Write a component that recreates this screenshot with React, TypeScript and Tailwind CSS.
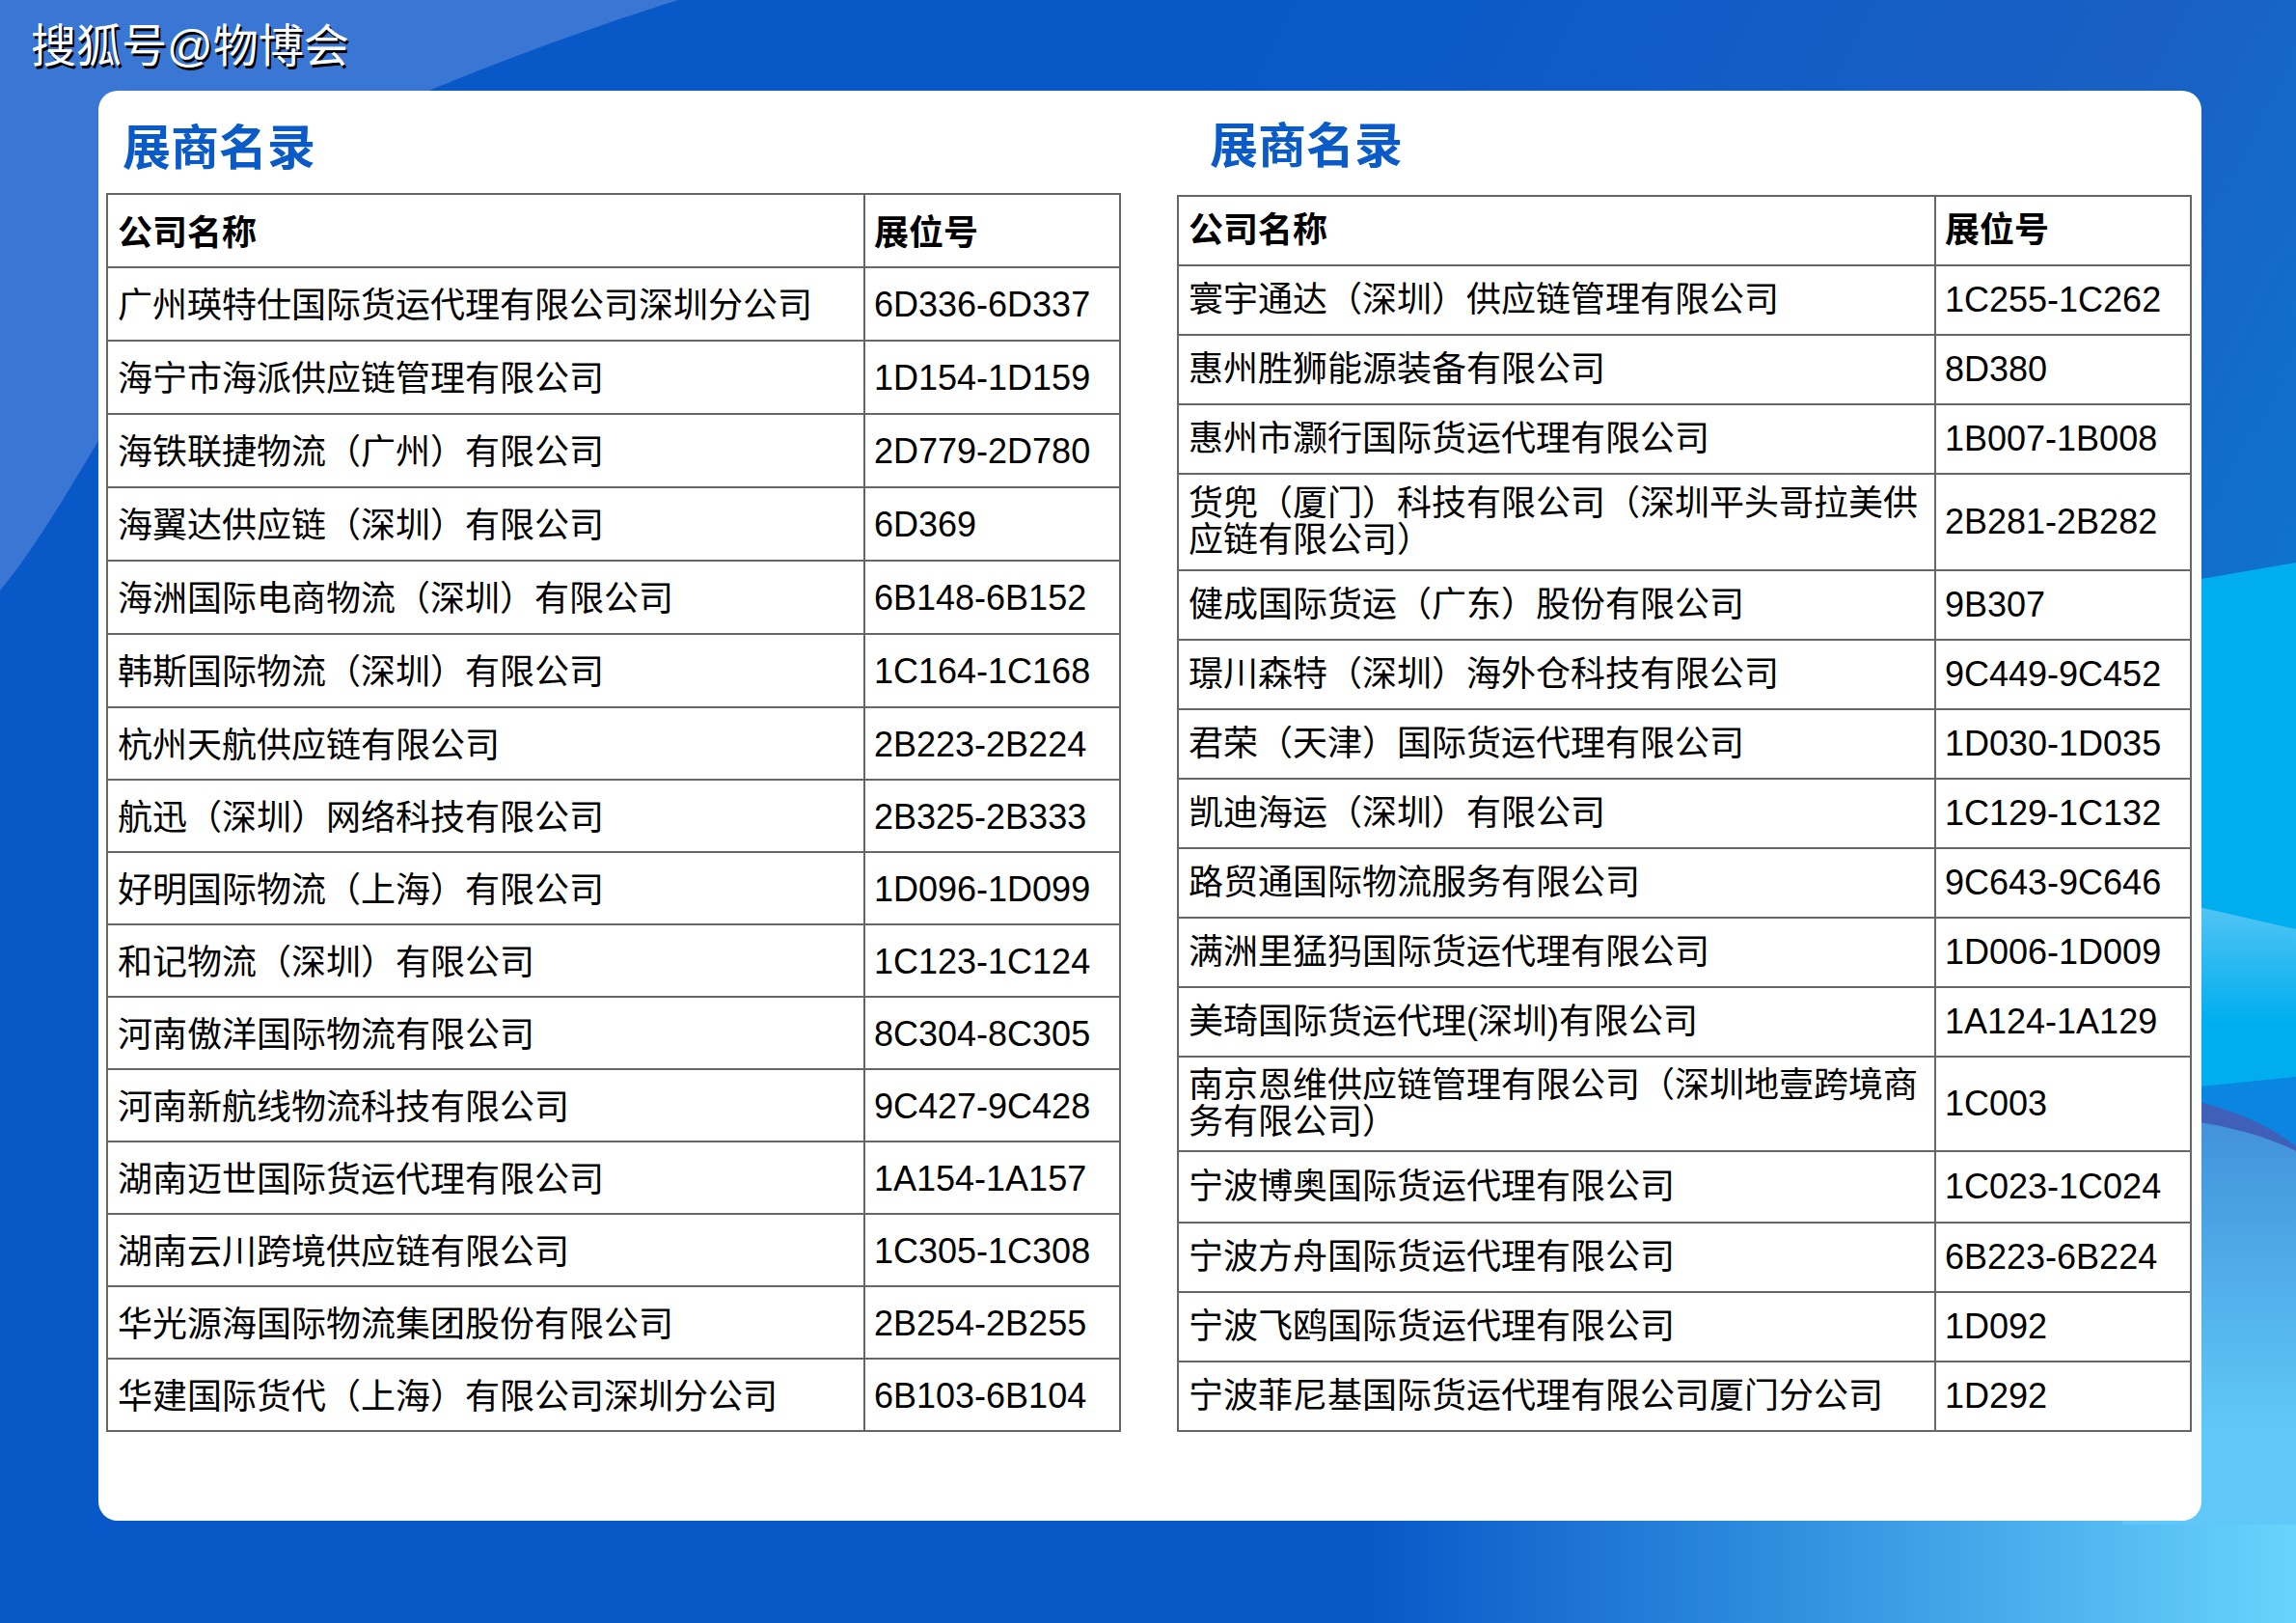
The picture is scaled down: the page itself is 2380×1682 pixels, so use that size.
type Row = { name: string; booth: string; h?: string }

const leftRows: Row[] = [
  { name: '广州瑛特仕国际货运代理有限公司深圳分公司', booth: '6D336-6D337', h: 'h-[76px]' },
  { name: '海宁市海派供应链管理有限公司', booth: '1D154-1D159', h: 'h-[76px]' },
  { name: '海铁联捷物流（广州）有限公司', booth: '2D779-2D780', h: 'h-[76px]' },
  { name: '海翼达供应链（深圳）有限公司', booth: '6D369', h: 'h-[76px]' },
  { name: '海洲国际电商物流（深圳）有限公司', booth: '6B148-6B152', h: 'h-[76px]' },
  { name: '韩斯国际物流（深圳）有限公司', booth: '1C164-1C168', h: 'h-[76px]' },
  { name: '杭州天航供应链有限公司', booth: '2B223-2B224', h: 'h-[75px]' },
  { name: '航迅（深圳）网络科技有限公司', booth: '2B325-2B333', h: 'h-[75px]' },
  { name: '好明国际物流（上海）有限公司', booth: '1D096-1D099', h: 'h-[75px]' },
  { name: '和记物流（深圳）有限公司', booth: '1C123-1C124', h: 'h-[75px]' },
  { name: '河南傲洋国际物流有限公司', booth: '8C304-8C305', h: 'h-[75px]' },
  { name: '河南新航线物流科技有限公司', booth: '9C427-9C428', h: 'h-[75px]' },
  { name: '湖南迈世国际货运代理有限公司', booth: '1A154-1A157', h: 'h-[75px]' },
  { name: '湖南云川跨境供应链有限公司', booth: '1C305-1C308', h: 'h-[75px]' },
  { name: '华光源海国际物流集团股份有限公司', booth: '2B254-2B255', h: 'h-[75px]' },
  { name: '华建国际货代（上海）有限公司深圳分公司', booth: '6B103-6B104', h: 'h-[75px]' },
]

const rightRows: Row[] = [
  { name: '寰宇通达（深圳）供应链管理有限公司', booth: '1C255-1C262' },
  { name: '惠州胜狮能源装备有限公司', booth: '8D380' },
  { name: '惠州市灏行国际货运代理有限公司', booth: '1B007-1B008' },
  { name: '货兜（厦门）科技有限公司（深圳平头哥拉美供应链有限公司）', booth: '2B281-2B282', h: 'h-[100px]' },
  { name: '健成国际货运（广东）股份有限公司', booth: '9B307' },
  { name: '璟川森特（深圳）海外仓科技有限公司', booth: '9C449-9C452' },
  { name: '君荣（天津）国际货运代理有限公司', booth: '1D030-1D035' },
  { name: '凯迪海运（深圳）有限公司', booth: '1C129-1C132' },
  { name: '路贸通国际物流服务有限公司', booth: '9C643-9C646' },
  { name: '满洲里猛犸国际货运代理有限公司', booth: '1D006-1D009' },
  { name: '美琦国际货运代理(深圳)有限公司', booth: '1A124-1A129' },
  { name: '南京恩维供应链管理有限公司（深圳地壹跨境商务有限公司）', booth: '1C003', h: 'h-[98px]' },
  { name: '宁波博奥国际货运代理有限公司', booth: '1C023-1C024', h: 'h-[74px]' },
  { name: '宁波方舟国际货运代理有限公司', booth: '6B223-6B224' },
  { name: '宁波飞鸥国际货运代理有限公司', booth: '1D092' },
  { name: '宁波菲尼基国际货运代理有限公司厦门分公司', booth: '1D292' },
]

function Background() {
  return (
    <svg className="absolute inset-0" width="2380" height="1682" viewBox="0 0 2380 1682">
      <defs>
        <linearGradient id="top" gradientUnits="userSpaceOnUse" x1="1300" y1="0" x2="2380" y2="560">
          <stop offset="0" stopColor="#0858c8" />
          <stop offset="0.7" stopColor="#1a60c4" />
          <stop offset="1" stopColor="#0f72cc" />
        </linearGradient>
        <linearGradient id="bottom" gradientUnits="userSpaceOnUse" x1="1420" y1="0" x2="2380" y2="0">
          <stop offset="0" stopColor="#0858c8" />
          <stop offset="0.55" stopColor="#3a9be4" />
          <stop offset="1" stopColor="#68d4fc" />
        </linearGradient>
        <linearGradient id="glow" gradientUnits="userSpaceOnUse" x1="0" y1="935" x2="0" y2="1060">
          <stop offset="0" stopColor="#55c5f5" />
          <stop offset="1" stopColor="#00aeef" />
        </linearGradient>
        <linearGradient id="body" gradientUnits="userSpaceOnUse" x1="0" y1="1150" x2="0" y2="1480">
          <stop offset="0" stopColor="#4190d8" />
          <stop offset="1" stopColor="#60c8f8" />
        </linearGradient>
      </defs>
      <path d="M703 0C560 45 445 94 445 94C300 190 190 330 102 457C70 510 35 570 0 612V0Z" fill="#3a76d4" />
      <path d="M1200 0H2380V590L2200 615H1200Z" fill="url(#top)" />
      <path d="M2200 614L2380 583V970L2200 925Z" fill="#00aeef" />
      <path d="M2200 922L2380 963V1120L2200 1134Z" fill="url(#glow)" />
      <path d="M2200 1134L2380 1116V1200L2200 1140Z" fill="#0a85e0" />
      <path d="M1400 1575H2380V1682H1400Z" fill="url(#bottom)" />
      <path d="M2200 1150C2290 1160 2340 1172 2380 1192V1580H2200Z" fill="url(#body)" />
      <path d="M2200 1128C2290 1138 2345 1160 2380 1188V1193C2340 1173 2290 1162 2200 1152Z" fill="#3f5fb8" />
    </svg>
  )
}

function ExhibitorTable({
  rows,
  headerH,
  headPad,
  namePad,
  boothPad,
}: {
  rows: Row[]
  headerH: string
  headPad: string
  namePad: string
  boothPad: string
}) {
  return (
    <table className="w-[1050px] table-fixed border-collapse text-[36px] leading-[38px] text-black">
      <colgroup>
        <col className="w-[785px]" />
        <col className="w-[265px]" />
      </colgroup>
      <thead>
        <tr className={headerH}>
          <th className={`border-2 border-[#666] pl-[10px] pr-[8px] text-left font-bold ${headPad}`}>公司名称</th>
          <th className={`border-2 border-[#666] pl-[9px] text-left font-bold ${headPad}`}>展位号</th>
        </tr>
      </thead>
      <tbody>
        {rows.map((row) => (
          <tr key={row.name} className={row.h ?? 'h-[72px]'}>
            <td className={`border-2 border-[#666] pl-[10px] pr-[8px] font-normal ${namePad}`}>{row.name}</td>
            <td className={`border-2 border-[#666] pl-[9px] ${boothPad}`}>{row.booth}</td>
          </tr>
        ))}
      </tbody>
    </table>
  )
}

export default function App() {
  return (
    <div className="relative h-[1682px] w-[2380px] overflow-hidden bg-[#0858c8] pl-[102px] pt-[94px] font-['Liberation_Sans','Noto_Sans_CJK_SC',sans-serif]">
      <Background />
      <div className="absolute left-[32px] top-[21px] text-[47px] leading-[54px] text-white [text-shadow:2px_3px_0_#000]">
        搜狐号@物博会
      </div>
      <main className="relative flex h-[1482px] w-[2180px] rounded-[20px] bg-white">
        <section className="ml-[8px] w-[1050px]">
          <h2 className="flex h-[106px] items-center pl-[17px] pt-[15px] text-[50px] font-bold text-[#0a5ac8]">展商名录</h2>
          <ExhibitorTable rows={leftRows} headerH="h-[76px]" headPad="pt-[6px]" namePad="pt-[4px]" boothPad="pt-[2px]" />
        </section>
        <section className="ml-[60px] w-[1050px]">
          <h2 className="flex h-[108px] items-center pl-[34px] pt-[9px] text-[50px] font-bold text-[#0a5ac8]">展商名录</h2>
          <ExhibitorTable rows={rightRows} headerH="h-[72px]" headPad="pt-0" namePad="pt-0" boothPad="pt-0" />
        </section>
      </main>
    </div>
  )
}
